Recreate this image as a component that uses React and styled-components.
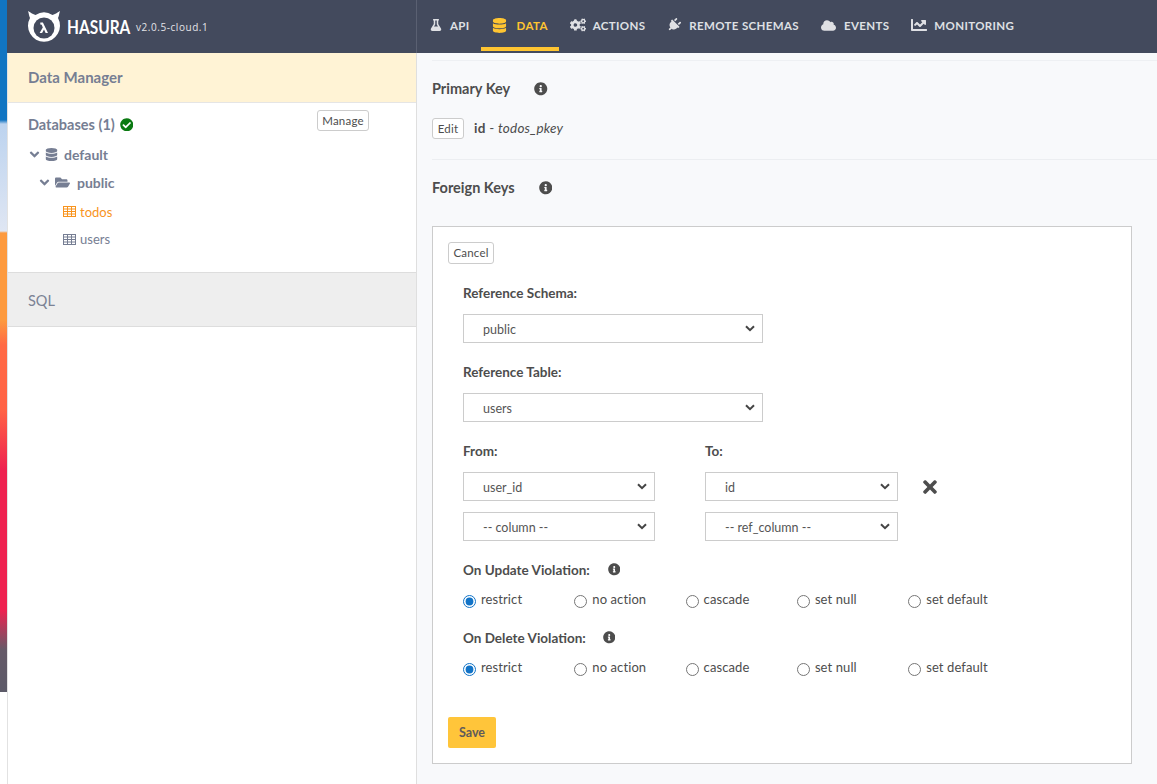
import React from "react"
import styled, { createGlobalStyle } from "styled-components"
import {
  FaFlask, FaDatabase, FaCogs, FaPlug, FaCloud, FaChartLine, FaAngleDown, FaFolderOpen,
  FaCheckCircle, FaInfoCircle, FaTimes,
} from "react-icons/fa"

const chevron = encodeURIComponent(
  '<svg xmlns="http://www.w3.org/2000/svg" width="10" height="7" viewBox="0 0 10 7"><path d="M1 1.2 5 5.2 9 1.2" fill="none" stroke="#444" stroke-width="2"/></svg>'
)

const GlobalStyle = createGlobalStyle`
  html, body { margin: 0; padding: 0; background: #fff; }
  body { font-family: "Lato", "Open Sans", sans-serif; color: #4d4d4d; }
  * { box-sizing: border-box; }
`

const Page = styled.div`
  display: flex;
  width: 1157px;
  height: 784px;
  overflow: hidden;
`

const WindowEdge = styled.div`
  flex: 0 0 7px;
  height: 692px;
  background: linear-gradient(
    to bottom,
    #1175c2 0, #1175c2 120px,
    #bcd3ef 124px, #dfe6f3 231px,
    #fd9a3e 233px, #fd9a3e 320px,
    #ff6a45 345px, #ff6245 410px,
    #ee2250 470px, #ee2250 610px,
    #655a68 650px, #5c5a68 692px
  );
`

const Main = styled.div`
  flex: 1;
  display: flex;
  flex-direction: column;
  min-width: 0;
`

const Header = styled.header`
  flex: 0 0 53px;
  display: flex;
  background: #434a5d;
`

const Brand = styled.div`
  flex: 0 0 410px;
  display: flex;
  align-items: center;
  padding-left: 20px;
  border-right: 1px solid #5a6072;
`

const BrandName = styled.span`
  display: inline-block;
  width: 62px;
  margin-left: 6px;
  font-size: 18px;
  font-weight: 700;
  color: #fff;
  transform: scaleX(0.86);
  transform-origin: left;
`

const Version = styled.span`
  margin-left: 7px;
  font-size: 10px;
  color: #e3e4e8;
  letter-spacing: 0.55px;
  font-family: "Open Sans", sans-serif;
`

const Nav = styled.nav`
  display: flex;
  padding-left: 2px;
`

const NavItem = styled.div`
  display: flex;
  align-items: center;
  gap: ${props => props.$gap || 8}px;
  height: 51px;
  padding: 3px 11px 0;
  font-size: 11.5px;
  font-weight: 700;
  letter-spacing: 0.35px;
  color: ${props => props.$active ? "#ffc531" : "#dfe0e4"};
  border-bottom: 4px solid ${props => props.$active ? "#ffc531" : "transparent"};
  svg {
    font-size: ${props => props.$iconSize || 14}px;
    transform: rotate(${props => props.$iconTurn || 0}deg);
  }
`

const Body = styled.div`
  flex: 1;
  display: flex;
  min-height: 0;
`

const Sidebar = styled.aside`
  flex: 0 0 410px;
  border-left: 1px solid #e2e2e2;
  border-right: 1px solid #dfdfdf;
  color: #767e93;
`

const ManagerBand = styled.div`
  height: 50px;
  display: flex;
  align-items: center;
  padding: 0 0 2px 20px;
  background: #fff3d5;
  border-bottom: 1px solid #e5e5e5;
  font-size: 15px;
  font-weight: 700;
`

const DatabasesRow = styled.div`
  display: flex;
  align-items: center;
  justify-content: space-between;
  height: 37px;
  padding: 0 47px 0 20px;
  button { margin-bottom: 2px; }
`

const DatabasesTitle = styled.div`
  display: flex;
  align-items: center;
  gap: 5px;
  font-size: 14.5px;
  font-weight: 700;
  margin-top: 6px;
  svg { color: #0b7a12; font-size: 13.5px; }
`

const SmallButton = styled.button`
  font-family: inherit;
  font-size: 11.5px;
  color: #4d4d4d;
  letter-spacing: 0.2px;
  background: #fff;
  border: 1px solid #ccc;
  border-radius: 3px;
  padding: 0;
  width: ${props => props.$width}px;
  height: ${props => props.$height || 21}px;
`

const Tree = styled.div`
  display: flex;
  flex-direction: column;
  height: 133px;
  border-bottom: 1px solid #ddd;
`

const TreeRow = styled.div`
  display: flex;
  align-items: center;
  height: ${props => props.$height}px;
  padding-left: ${props => props.$indent}px;
  gap: ${props => props.$gap}px;
  font-size: ${props => props.$bold ? 14 : 13}px;
  font-weight: ${props => props.$bold ? 700 : 400};
  color: ${props => props.$active ? "#f8941e" : "#767e93"};
`

const TreeLabel = styled.span`
  margin-left: ${props => props.$left || 0}px;
`

const SqlBand = styled.div`
  height: 54px;
  display: flex;
  align-items: center;
  padding: 2px 0 0 20px;
  background: #eee;
  border-bottom: 1px solid #ddd;
  font-size: 14.5px;
  color: #7b8294;
`

const Content = styled.main`
  flex: 1;
  background: #f8f9fb;
  padding: 7px 25px 0 15px;
  min-width: 0;
`

const TopRule = styled.div`
  height: 1px;
  margin-right: -25px;
  background: #eef0f3;
`

const Heading = styled.h4`
  display: flex;
  align-items: center;
  gap: ${props => props.$gap}px;
  margin: ${props => props.$margin};
  font-size: 14.5px;
  line-height: 20px;
  font-weight: 700;
  color: #4d4d4d;
  svg { font-size: 13.5px; color: #4d4d4d; }
`

const KeyRow = styled.div`
  display: flex;
  align-items: center;
  gap: 10px;
  font-size: 13.5px;
  letter-spacing: 0.2px;
  color: #4d4d4d;
  span { margin-top: -2px; }
  b { font-weight: 700; }
  em { font-style: italic; }
`

const Rule = styled.hr`
  margin: 20px -25px 0 0;
  border: 0;
  border-top: 1px solid #eceef1;
`

const FormBox = styled.section`
  width: 700px;
  height: 538px;
  margin-top: 28px;
  padding: 14px 15px 15px;
  background: #fff;
  border: 1px solid #ccc;
`

const Fields = styled.div`
  padding-left: 15px;
`

const FieldLabel = styled.label`
  display: flex;
  align-items: center;
  gap: ${props => props.$gap || 0}px;
  height: 18px;
  font-size: 13.5px;
  font-weight: 700;
  color: #4d4d4d;
  margin: ${props => props.$margin || 0};
  svg { font-size: 12.5px; }
`

const Select = styled.select`
  display: block;
  appearance: none;
  width: ${props => props.$width}px;
  height: 29px;
  padding: 2px 19px 0;
  font-family: inherit;
  font-size: 12.5px;
  color: #555;
  background: #fff url("data:image/svg+xml,${chevron}") no-repeat right 7px center;
  border: 1px solid #ccc;
  border-radius: 0;
`

const MappingGrid = styled.div`
  display: grid;
  grid-template-columns: 192px 193px 30px;
  column-gap: 50px;
  row-gap: 11px;
  align-items: center;
  margin-top: 20px;
`

const Remove = styled.span`
  display: flex;
  color: #4d4d4d;
  font-size: 20px;
  margin: 1px 0 0 -28px;
`

const RadioRow = styled.div`
  display: grid;
  grid-template-columns: repeat(5, 111.3px);
  margin-top: ${props => props.$top}px;
`

const RadioLabel = styled.label`
  display: flex;
  align-items: center;
  font-size: 13px;
  letter-spacing: 0.1px;
  color: #4d4d4d;
  span { margin: -4px 0 0 5px; }
`

const Radio = styled.input`
  width: 13px;
  height: 13px;
  margin: 0;
  accent-color: #1173c7;
`

const SaveButton = styled.button`
  display: block;
  width: 48px;
  height: 31px;
  margin-top: 41px;
  padding: 0;
  font-family: inherit;
  font-size: 12.5px;
  font-weight: 700;
  color: #5f5a5a;
  background: #ffc53a;
  border: 0;
  border-radius: 2px;
`

const HasuraLogo = () => (
  <svg width="34" height="34" viewBox="0 0 34 34">
    <path d="M1 1 C2 4 2 6 3 8 A16 16 0 1 0 31 8 C32 6 32 4 33 1 C30 3 28 4 25.5 5 A16 16 0 0 0 8.5 5 C6 4 4 3 1 1Z" fill="#fff" />
    <circle cx="17" cy="18" r="10.5" fill="#434a5d" />
    <path d="M12.6 23 15.8 17.5 14.7 14.8 13.3 14.5 13.3 12.6 15.9 12.6 21 23 18.6 23 17 19.6 15.1 23Z" fill="#fff" />
  </svg>
)

const TableIcon = () => (
  <svg width="13" height="11" viewBox="0 0 13 11" fill="none" stroke="currentColor" strokeWidth="1">
    <rect x="0.5" y="0.5" width="12" height="10" />
    <path d="M0.5 3H12.5M0.5 5.5H12.5M0.5 8H12.5M4.5 0.5V10.5M8.5 0.5V10.5" />
  </svg>
)

const navItems = [
  { label: "API", Icon: FaFlask, iconSize: 12 },
  { label: "DATA", Icon: FaDatabase, active: true, iconSize: 15, gap: 10 },
  { label: "ACTIONS", Icon: FaCogs, iconSize: 16, gap: 7 },
  { label: "REMOTE SCHEMAS", Icon: FaPlug, iconSize: 14, iconTurn: 45 },
  { label: "EVENTS", Icon: FaCloud, iconSize: 15 },
  { label: "MONITORING", Icon: FaChartLine, iconSize: 16, gap: 7 },
]

const violationOptions = ["restrict", "no action", "cascade", "set null", "set default"]

const ViolationRadios = ({ name, top }) => (
  <RadioRow $top={top}>
    {violationOptions.map((option, i) => (
      <RadioLabel key={option}>
        <Radio type="radio" name={name} defaultChecked={i === 0} />
        <span>{option}</span>
      </RadioLabel>
    ))}
  </RadioRow>
)

const Option = ({ value, width }) => (
  <Select $width={width} defaultValue={value}>
    <option value={value}>{value}</option>
  </Select>
)

const App = () => {
  return (
    <Page>
      <GlobalStyle />
      <WindowEdge />
      <Main>
        <Header>
          <Brand>
            <HasuraLogo />
            <BrandName>HASURA</BrandName>
            <Version>v2.0.5-cloud.1</Version>
          </Brand>
          <Nav>
            {navItems.map(({ label, Icon, active, iconSize, iconTurn, gap }) => (
              <NavItem key={label} $active={active} $iconSize={iconSize} $iconTurn={iconTurn} $gap={gap}>
                <Icon />
                {label}
              </NavItem>
            ))}
          </Nav>
        </Header>
        <Body>
          <Sidebar>
            <ManagerBand>Data Manager</ManagerBand>
            <DatabasesRow>
              <DatabasesTitle>
                Databases (1) <FaCheckCircle />
              </DatabasesTitle>
              <SmallButton $width={52}>Manage</SmallButton>
            </DatabasesRow>
            <Tree>
              <TreeRow $height={28} $indent={19} $gap={3} $bold>
                <FaAngleDown size={15} />
                <FaDatabase size={13} />
                <TreeLabel $left={3}>default</TreeLabel>
              </TreeRow>
              <TreeRow $height={29} $indent={29} $gap={3} $bold>
                <FaAngleDown size={15} />
                <FaFolderOpen size={15} />
                <TreeLabel $left={4}>public</TreeLabel>
              </TreeRow>
              <TreeRow $height={29} $indent={55} $gap={4} $active>
                <TableIcon />
                todos
              </TreeRow>
              <TreeRow $height={26} $indent={55} $gap={4}>
                <TableIcon />
                users
              </TreeRow>
            </Tree>
            <SqlBand>SQL</SqlBand>
          </Sidebar>
          <Content>
            <TopRule />
            <Heading $gap={24} $margin="18px 0 19px">
              Primary Key <FaInfoCircle />
            </Heading>
            <KeyRow>
              <SmallButton $width={32}>Edit</SmallButton>
              <span>
                <b>id</b> - <em>todos_pkey</em>
              </span>
            </KeyRow>
            <Rule />
            <Heading $gap={24} $margin="18px 0 0">
              Foreign Keys <FaInfoCircle />
            </Heading>
            <FormBox>
              <SmallButton $width={46} $height={22}>Cancel</SmallButton>
              <Fields>
                <FieldLabel $margin="20px 0 12px">Reference Schema:</FieldLabel>
                <Option value="public" width={300} />
                <FieldLabel $margin="20px 0 12px">Reference Table:</FieldLabel>
                <Option value="users" width={300} />
                <MappingGrid>
                  <FieldLabel $margin="0 0 1px">From:</FieldLabel>
                  <FieldLabel $margin="0 0 1px">To:</FieldLabel>
                  <span />
                  <Option value="user_id" width={192} />
                  <Option value="id" width={193} />
                  <Remove><FaTimes /></Remove>
                  <Option value="-- column --" width={192} />
                  <Option value="-- ref_column --" width={193} />
                </MappingGrid>
                <FieldLabel $margin="20px 0 0" $gap={18}>
                  On Update Violation: <FaInfoCircle />
                </FieldLabel>
                <ViolationRadios name="update" top={16} />
                <FieldLabel $margin="21px 0 0" $gap={17}>
                  On Delete Violation: <FaInfoCircle />
                </FieldLabel>
                <ViolationRadios name="delete" top={16} />
              </Fields>
              <SaveButton>Save</SaveButton>
            </FormBox>
          </Content>
        </Body>
      </Main>
    </Page>
  )
}

export default App
